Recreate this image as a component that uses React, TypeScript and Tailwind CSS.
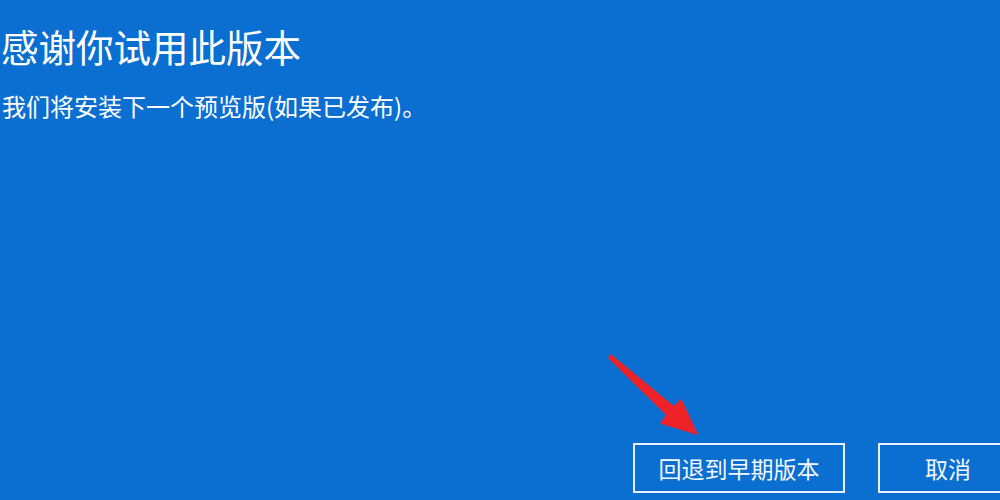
import React from 'react';

const font = { fontFamily: '"Noto Sans CJK SC", "Noto Sans", sans-serif' };

const RedArrow: React.FC = () => (
  <svg
    className="pointer-events-none absolute left-0 top-0"
    width="1000"
    height="500"
    viewBox="0 0 1000 500"
  >
    <polygon
      points="609,358 667,415 661,423 697,434 681,400 674,407 611,355"
      fill="#ee2229"
      stroke="#ee2229"
      strokeWidth="1.5"
      strokeLinejoin="round"
    />
  </svg>
);

const App: React.FC = () => {
  return (
    <div
      className="relative flex h-[500px] w-[1000px] flex-col overflow-hidden bg-[#0b6fd1] text-white"
      style={font}
    >
      <div className="flex flex-col pl-[1px] pt-[27px]">
        <h1 className="text-[37.5px] font-normal leading-[37px] tracking-normal">感谢你试用此版本</h1>
        <p className="mt-[30px] pl-[1px] text-[24px] leading-[24px]">我们将安装下一个预览版(如果已发布)。</p>
      </div>

      <div className="mt-auto mb-[7px] -mr-[18px] flex justify-end gap-[33px]">
        <button className="h-[50px] w-[212px] border-2 border-[#e6effa] text-[23px] leading-none text-[#f4f8fd]">
          回退到早期版本
        </button>
        <button className="h-[50px] w-[140px] border-2 border-[#e6effa] text-[23px] leading-none text-[#f4f8fd]">
          取消
        </button>
      </div>

      <RedArrow />
    </div>
  );
};

export default App;
